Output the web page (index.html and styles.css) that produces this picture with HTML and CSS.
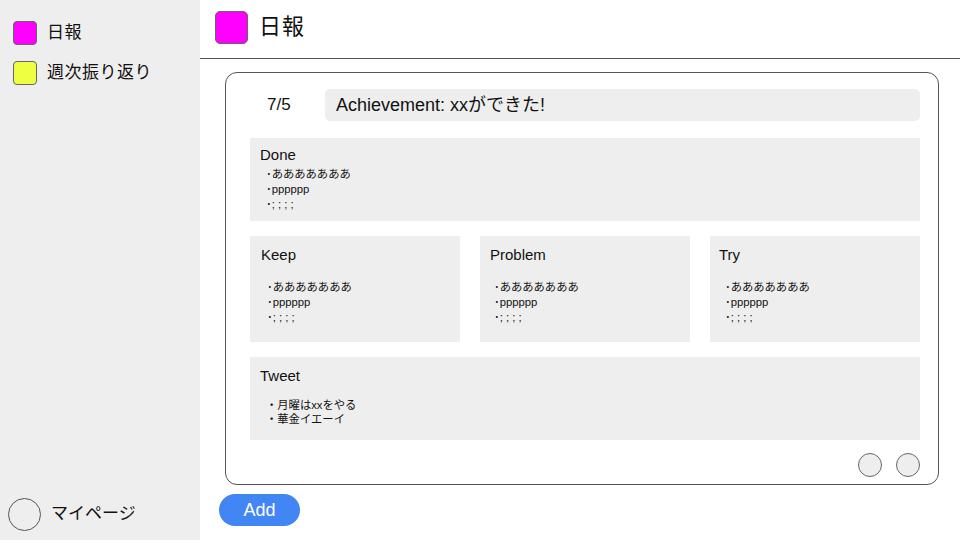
FILE: index.html
```html
<!DOCTYPE html>
<html lang="ja">
<head>
<meta charset="utf-8">
<link rel="stylesheet" href="styles.css">
</head>
<body>
<aside class="sidebar">
  <nav class="nav">
    <div class="nav-item"><span class="swatch swatch-pink"></span><span class="nav-label">日報</span></div>
    <div class="nav-item"><span class="swatch swatch-yellow"></span><span class="nav-label">週次振り返り</span></div>
  </nav>
  <div class="mypage"><span class="avatar"></span><span class="mypage-label">マイページ</span></div>
</aside>
<main class="main">
  <header class="header">
    <span class="header-swatch"></span>
    <h1 class="header-title">日報</h1>
  </header>
  <section class="card">
    <div class="card-top">
      <div class="date">7/5</div>
      <div class="achievement">Achievement: xxができた!</div>
    </div>
    <div class="box box-done">
      <div class="box-title">Done</div>
      <ul class="list">
        <li>･あああああああ</li>
        <li>･pppppp</li>
        <li>･; ; ; ;</li>
      </ul>
    </div>
    <div class="kpt">
      <div class="box box-kpt">
        <div class="box-title">Keep</div>
        <ul class="list list-kpt">
          <li>･あああああああ</li>
          <li>･pppppp</li>
          <li>･; ; ; ;</li>
        </ul>
      </div>
      <div class="box box-kpt">
        <div class="box-title">Problem</div>
        <ul class="list list-kpt">
          <li>･あああああああ</li>
          <li>･pppppp</li>
          <li>･; ; ; ;</li>
        </ul>
      </div>
      <div class="box box-kpt">
        <div class="box-title">Try</div>
        <ul class="list list-kpt">
          <li>･あああああああ</li>
          <li>･pppppp</li>
          <li>･; ; ; ;</li>
        </ul>
      </div>
    </div>
    <div class="box box-tweet">
      <div class="box-title">Tweet</div>
      <ul class="list list-tweet">
        <li>・月曜はxxをやる</li>
        <li>・華金イエーイ</li>
      </ul>
    </div>
    <div class="card-actions">
      <span class="dot-btn"></span>
      <span class="dot-btn"></span>
    </div>
  </section>
  <button class="add-btn">Add</button>
</main>
</body>
</html>
```
FILE: styles.css
```css
* { box-sizing: border-box; }
html, body { margin: 0; padding: 0; }
body {
  width: 960px;
  height: 540px;
  display: flex;
  font-family: "Liberation Sans", "Noto Sans CJK JP", sans-serif;
  color: #111;
  background: #fff;
  overflow: hidden;
}
.sidebar {
  width: 200px;
  height: 540px;
  background: #eeeeee;
  display: flex;
  flex-direction: column;
  justify-content: space-between;
}
.nav {
  padding: 21px 0 0 13px;
  display: flex;
  flex-direction: column;
  gap: 16px;
}
.nav-item {
  display: flex;
  align-items: center;
  height: 24px;
}
.swatch {
  width: 24px;
  height: 24px;
  border: 1px solid #666;
  border-radius: 4px;
  flex: none;
}
.swatch-pink { background: #ff00ff; }
.swatch-yellow { background: #eeff41; }
.nav-label {
  margin: 0 0 0 10px;
  font-size: 17px;
  line-height: 20px;
  letter-spacing: 0.5px;
}
.mypage {
  display: flex;
  align-items: center;
  padding: 0 0 9px 8px;
}
.avatar {
  width: 33px;
  height: 33px;
  border-radius: 50%;
  border: 1px solid #555;
  background: #eeeeee;
  flex: none;
}
.mypage-label {
  margin: 0 0 2px 10px;
  font-size: 17px;
  line-height: 20px;
}
.main {
  flex: 1;
  display: flex;
  flex-direction: column;
}
.header {
  height: 59px;
  border-bottom: 1px solid #555;
  display: flex;
  align-items: flex-start;
  padding: 11px 0 0 15px;
}
.header-swatch {
  width: 33px;
  height: 33px;
  background: #ff00ff;
  border: 1px solid #666;
  border-radius: 5px;
  flex: none;
}
.header-title {
  margin: 0 0 0 11px;
  font-size: 22px;
  font-weight: normal;
  line-height: 31px;
  letter-spacing: 1px;
}
.card {
  margin: 13px 0 0 25px;
  width: 714px;
  height: 413px;
  border: 1px solid #555;
  border-radius: 12px;
  padding: 16px 18px 0 24px;
  display: flex;
  flex-direction: column;
}
.card-top {
  display: flex;
  align-items: center;
  height: 32px;
}
.date {
  width: 75px;
  padding-left: 17px;
  font-size: 17px;
}
.achievement {
  flex: 1;
  height: 32px;
  background: #eeeeee;
  border-radius: 5px;
  padding-left: 11px;
  font-size: 18px;
  line-height: 32px;
}
.box {
  background: #eeeeee;
}
.box-title {
  font-size: 15px;
  line-height: 18px;
}
.list {
  list-style: none;
  margin: 0;
  padding: 0;
  font-size: 11.3px;
  line-height: 15px;
}
.box-done {
  margin-top: 17px;
  height: 83px;
  padding: 8px 10px 0 10px;
}
.box-done .list {
  margin-top: 3px;
  padding-left: 6px;
}
.kpt {
  margin-top: 15px;
  display: flex;
  gap: 20px;
}
.box-kpt {
  width: 210px;
  flex: none;
  height: 106px;
  padding: 10px 10px 0 11px;
}
.box-kpt:nth-child(2) { padding-left: 10px; }
.box-kpt:nth-child(3) { padding-left: 9px; }
.list-kpt {
  margin-top: 16px;
  padding-left: 6px;
}
.box-kpt:nth-child(2) .list-kpt { padding-left: 4px; }
.box-kpt:nth-child(3) .list-kpt { padding-left: 6px; }
.box-tweet {
  margin-top: 15px;
  height: 83px;
  padding: 10px 10px 0 10px;
}
.list-tweet {
  margin-top: 13px;
  padding-left: 6px;
  line-height: 14px;
}
.card-actions {
  margin-top: 13px;
  display: flex;
  justify-content: flex-end;
  gap: 14px;
}
.dot-btn {
  width: 24px;
  height: 24px;
  border-radius: 50%;
  border: 1px solid #666;
  background: #eeeeee;
}
.add-btn {
  margin: 9px 0 0 19px;
  width: 81px;
  height: 32px;
  border: none;
  border-radius: 16px;
  background: #4285f4;
  color: #fff;
  font-family: "Liberation Sans", sans-serif;
  font-size: 18px;
  padding: 0;
}
```
